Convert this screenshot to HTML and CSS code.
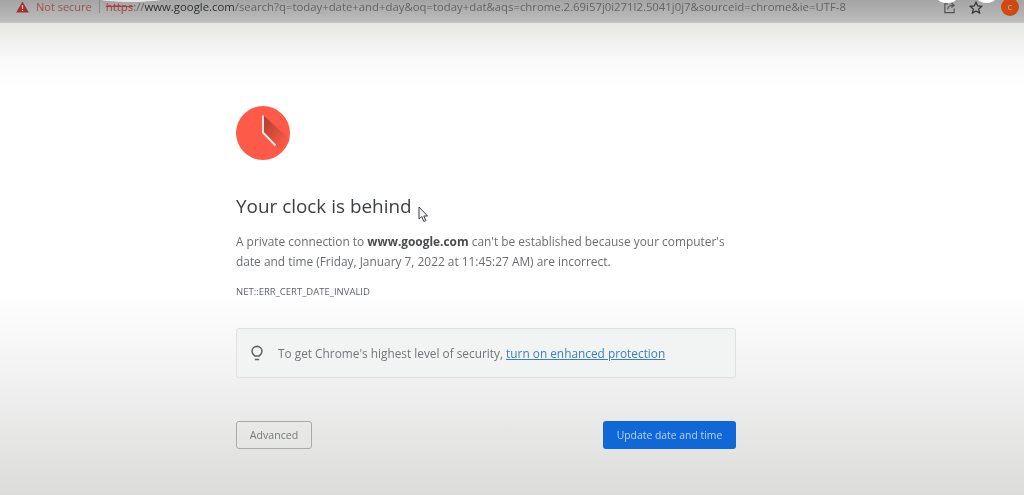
FILE: index.html
```html
<!DOCTYPE html>
<html lang="en">
<head>
  <meta charset="UTF-8">
  <title>Privacy error</title>
  <link rel="stylesheet" href="styles.css">
</head>
<body>
  <header class="toolbar">
    <svg class="warn-icon" width="13" height="12" viewBox="0 0 13 12">
      <path d="M6.5 0.5 L12.8 11.5 H0.2 Z" fill="#a5302a"/>
      <rect x="5.9" y="4" width="1.2" height="4" fill="#d8c8c4"/>
      <rect x="5.9" y="8.8" width="1.2" height="1.3" fill="#d8c8c4"/>
    </svg>
    <span class="not-secure">Not secure</span>
    <span class="divider"></span>
    <span class="url"><span class="scheme">https</span>://<span class="host">www.google.com</span>/search?q=today+date+and+day&amp;oq=today+dat&amp;aqs=chrome.2.69i57j0i271l2.5041j0j7&amp;sourceid=chrome&amp;ie=UTF-8</span>
    <div class="toolbar-icons">
      <svg width="13" height="13" viewBox="0 0 14 14" fill="none" stroke="#555" stroke-width="1.3">
        <path d="M5 3 H2 V12.5 H12 V8"/>
        <path d="M5 9 C5 6 8 4.5 11 4.5 M9 2 L12 4.5 L9 7"/>
      </svg>
      <svg width="14" height="13" viewBox="0 0 15 14" fill="none" stroke="#333" stroke-width="1.3">
        <path d="M7.5 1.2 L9.3 5.3 L13.8 5.7 L10.4 8.6 L11.4 13 L7.5 10.7 L3.6 13 L4.6 8.6 L1.2 5.7 L5.7 5.3 Z"/>
      </svg>
      <span class="avatar">C</span>
    </div>
    <span class="caption-bit caption-left"></span>
    <span class="caption-bit caption-share"></span>
    <span class="caption-bit caption-star"></span>
  </header>

  <main class="page">
    <div class="content">
      <svg class="clock" width="54" height="54" viewBox="0 0 54 54">
        <defs>
          <linearGradient id="clock-shade" x1="0.1" y1="0.1" x2="0.85" y2="0.85">
            <stop offset="0" stop-color="#b5402f"/>
            <stop offset="1" stop-color="#fe5a4a"/>
          </linearGradient>
        </defs>
        <circle cx="27" cy="27" r="27" fill="#fe5a4a"/>
        <path d="M27 9 L27 27 L45.5 45.5 C50 41 53 36 53.5 33 Z" fill="url(#clock-shade)"/>
        <path d="M27 9.5 V26.5 L39.5 39.5" fill="none" stroke="#f8e6e2" stroke-width="2"/>
      </svg>
      <h1 class="title">Your clock is behind</h1>
      <p class="message">A private connection to <b>www.google.com</b> can't be established because your computer's date and time (Friday, January 7, 2022 at 11:45:27 AM) are incorrect.</p>
      <p class="error-code">NET::ERR_CERT_DATE_INVALID</p>
      <div class="tip">
        <svg width="12" height="17" viewBox="0 0 14 19" fill="none" stroke="#5f6463" stroke-width="1.8">
          <path d="M4.5 12.5 C3 11 1.2 9.6 1.2 6.8 C1.2 3.5 3.8 1.2 7 1.2 C10.2 1.2 12.8 3.5 12.8 6.8 C12.8 9.6 11 11 9.5 12.5 Z"/>
          <path d="M4.5 16.5 H9.5"/>
        </svg>
        <span>To get Chrome's highest level of security, <a class="tip-link">turn on enhanced protection</a></span>
      </div>
      <div class="actions">
        <button class="btn-advanced">Advanced</button>
        <button class="btn-update">Update date and time</button>
      </div>
    </div>
    <svg class="cursor" width="11" height="17" viewBox="0 0 11 17">
      <path d="M1 1 V13 L3.8 10.6 L5.8 15.5 L7.8 14.6 L5.8 10 H9.6 Z" fill="#f4f4f4" stroke="#3c4043" stroke-width="1"/>
    </svg>
  </main>
</body>
</html>
```

FILE: styles.css
```css
* {
  box-sizing: border-box;
}

html, body {
  height: 100%;
}

body {
  margin: 0;
  overflow: hidden;
  font-family: "Open Sans", "Noto Sans", sans-serif;
  color: #5f6368;
  display: flex;
  flex-direction: column;
  position: relative;
  filter: blur(0.35px);
}

.toolbar {
  height: 23px;
  flex: none;
  background: linear-gradient(#a3a4a3, #bcbdbc);
  border-bottom: 1px solid #c2c4c2;
  display: flex;
  align-items: center;
  padding: 0 5px 9px 16px;
  font-size: 11.35px;
  white-space: nowrap;
  position: relative;
}

.not-secure {
  margin-left: 7px;
  font-size: 11px;
  color: #9c5350;
}

.divider {
  width: 1px;
  height: 13px;
  margin: 0 6px 0 7px;
  background: #8a8b8a;
}

.url {
  color: #636565;
}

.scheme {
  color: #a5403a;
  text-decoration: line-through;
}

.host {
  color: #2e3030;
}

.toolbar-icons {
  margin-left: auto;
  display: flex;
  align-items: center;
  gap: 13px;
  margin-top: 1px;
}

.avatar {
  width: 18px;
  height: 18px;
  border-radius: 50%;
  background: #cf4a12;
  color: #e9b9a0;
  font-size: 7px;
  display: flex;
  align-items: center;
  justify-content: center;
  margin-left: 5px;
}

.caption-bit {
  position: absolute;
  top: -5px;
  height: 8px;
  background: #fff;
  border-radius: 50%;
}

.caption-left {
  left: 100px;
  width: 62px;
  height: 6px;
  top: -4px;
  opacity: 0.7;
}

.caption-share {
  left: 938px;
  width: 18px;
}

.caption-star {
  left: 978px;
  width: 17px;
}

.page {
  flex: 1;
  position: relative;
  background: linear-gradient(#e6e7e5 0, #fbfbfb 40px, #fff 70px, #fff 270px, #f1f2f1 350px, #dcdddb 472px);
  padding: 83px 0 0 236px;
}

.content {
  width: 500px;
}

.clock {
  display: block;
}

.title {
  margin: 32px 0 0;
  font-size: 18.9px;
  line-height: 28px;
  font-weight: 400;
  color: #3d4043;
}

.message {
  margin: 11px 0 0;
  font-size: 11.9px;
  line-height: 20px;
  color: #6b6e70;
}

.message b {
  color: #4a4c4e;
}

.error-code {
  margin: 15px 0 0;
  font-size: 9.5px;
  line-height: 12px;
  color: #5f6368;
}

.tip {
  margin-top: 30px;
  height: 50px;
  display: flex;
  align-items: center;
  gap: 15px;
  padding-left: 14px;
  font-size: 11.85px;
  color: #73777a;
  background: #f2f4f4;
  border: 1px solid #dfe1e1;
  border-radius: 3px;
}

.tip-link {
  color: #3f7fb8;
  text-decoration: underline;
}

.actions {
  margin-top: 43px;
  display: flex;
  justify-content: space-between;
}

.actions button {
  height: 28px;
  font-family: inherit;
  border-radius: 3px;
  padding: 0;
}

.btn-advanced {
  width: 76px;
  font-size: 10.6px;
  background: transparent;
  border: 1px solid #a9abaa;
  color: #767a7b;
}

.btn-update {
  width: 133px;
  font-size: 10.4px;
  background: #0f67d8;
  border: none;
  color: #b9d4f4;
}

.cursor {
  position: absolute;
  left: 418px;
  top: 183px;
}
```
